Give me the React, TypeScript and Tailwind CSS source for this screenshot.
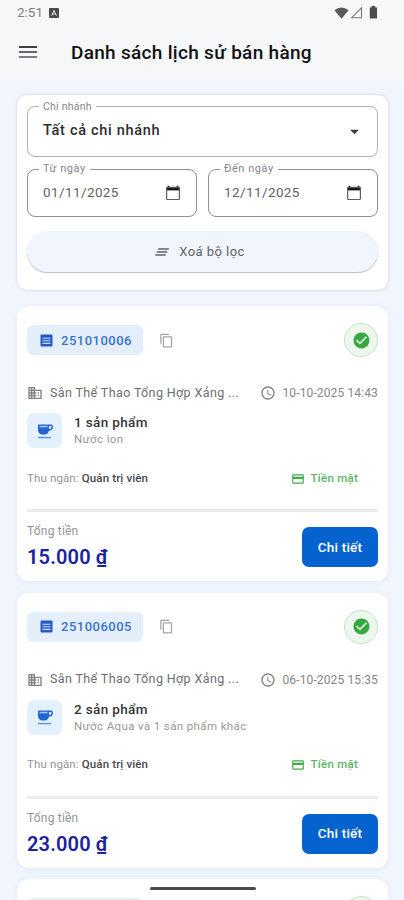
import React from "react";
import {
  MdClearAll,
  MdContentCopy,
  MdBusiness,
  MdAccessTime,
  MdCheckCircle,
  MdCreditCard,
  MdArrowDropDown,
} from "react-icons/md";

type Sale = {
  id: string;
  time: string;
  count: string;
  items: string;
  total: string;
};

const sales: Sale[] = [
  { id: "251010006", time: "10-10-2025 14:43", count: "1 sản phẩm", items: "Nước ion", total: "15.000 ₫" },
  { id: "251006005", time: "06-10-2025 15:35", count: "2 sản phẩm", items: "Nước Aqua và 1 sản phẩm khác", total: "23.000 ₫" },
];

function StatusBar() {
  return (
    <div className="flex h-[25px] items-center pl-[17px] pr-[26px]">
      <span className="text-[13.5px] leading-none text-[#808183]">2:51</span>
      <svg className="ml-[6px]" width="10" height="10" viewBox="0 0 10 10">
        <rect width="10" height="10" rx="1" fill="#4a4b4d" />
        <path d="M2.6 7.6L5 2.4l2.4 5.2M3.6 6h2.8" fill="none" stroke="#e4e5e7" strokeWidth="1" />
      </svg>
      <svg className="ml-auto" width="15" height="12" viewBox="0 0 15 12">
        <path d="M.4 3.3Q7.5-2.4 14.6 3.3L7.5 11.800z" fill="#58595b" />
      </svg>
      <svg className="ml-px" width="13" height="13" viewBox="0 0 13 13">
        <path d="M1.5 11.800L11.5 1.800v10z" fill="none" stroke="#77787a" strokeWidth="1.1" />
      </svg>
      <svg className="ml-[6px]" width="9" height="13" viewBox="0 0 9 13">
        <path d="M2.5 0h3.800v1.500H8v11H.8v-11h1.700z" fill="#4b4c4e" />
      </svg>
    </div>
  );
}

function MenuIcon() {
  return (
    <svg width="18" height="14" viewBox="0 0 18 14">
      <path d="M0 2h18" stroke="#3c3d40" strokeWidth="2" />
      <path d="M0 7h18" stroke="#66676a" strokeWidth="2" />
      <path d="M0 12h18" stroke="#7c7d80" strokeWidth="2" />
    </svg>
  );
}

function DateField({ label, value }: { label: string; value: string }) {
  return (
    <div className="relative flex h-[48px] flex-1 items-center justify-between rounded-[8px] border border-[#8f9092] pr-[15px] pl-[15px]">
      <span className="absolute -top-[8px] left-[11px] bg-white px-[4px] text-[11px] leading-[14px] tracking-[0.55px] whitespace-nowrap text-[#85868a]">
        {label}
      </span>
      <span className="text-[13.5px] leading-none tracking-[0.4px] text-[#606165]">{value}</span>
      <svg width="16" height="16" viewBox="0 0 16 16">
        <path d="M1.5 1.800h13v3.600h-13z" fill="#171719" />
        <path d="M3.500 .8v2M12.500 .8v2" stroke="#171719" strokeWidth="1.6" />
        <rect x="1.600" y="2.500" width="12.800" height="12" rx="1" fill="none" stroke="#5b5c5f" strokeWidth="1.2" />
      </svg>
    </div>
  );
}

function Filters() {
  return (
    <section className="h-[195px] rounded-[10px] bg-white px-[10px] pt-[11px] shadow-[0_0_3px_rgba(70,75,90,0.25)]">
      <div className="relative flex h-[51px] items-center justify-between rounded-[8px] border border-[#b0b1b3] pr-[12px] pl-[15px]">
        <span className="absolute -top-[7px] left-[11px] bg-white px-[4px] text-[10.5px] leading-[14px] tracking-[0.25px] whitespace-nowrap text-[#85868a]">
          Chi nhánh
        </span>
        <span className="text-[14.5px] leading-none font-medium tracking-[0.7px] text-[#2c2d30]">Tất cả chi nhánh</span>
        <MdArrowDropDown className="size-[21px] text-[#3c3d40]" />
      </div>
      <div className="mt-[12px] flex gap-[11px]">
        <DateField label="Từ ngày" value="01/11/2025" />
        <DateField label="Đến ngày" value="12/11/2025" />
      </div>
      <button className="mt-[14px] flex h-[41px] w-full items-center justify-center gap-[8px] rounded-full bg-[#f0f5fe] pr-[7px] text-[13px] tracking-[0.45px] text-[#606368] shadow-[0_1px_1px_rgba(60,65,80,0.35)]">
        <MdClearAll className="size-[18px]" />
        Xoá bộ lọc
      </button>
    </section>
  );
}

function InvoiceIcon() {
  return (
    <svg width="13" height="13" viewBox="0 0 13 13">
      <rect x=".5" y=".5" width="12" height="12" rx="1" fill="#2458c4" />
      <path d="M2.500 4.200h8M2.500 6.800h8M2.500 9.400h8" stroke="#cfe1fa" strokeWidth="1.1" />
    </svg>
  );
}

function CupIcon() {
  return (
    <svg width="18" height="18" viewBox="0 0 18 18">
      <path d="M2 2.500h11V8a4.500 4.500 0 0 1-4.500 4.500h-2A4.500 4.500 0 0 1 2 8z" fill="#1f66cf" />
      <path d="M3.500 3.800h8v1.500h-8z" fill="#a5c8f2" />
      <path d="M13 3.200h2.100q1 0 1 1v1.300q0 2.300-3.300 2.500" fill="none" stroke="#1f66cf" strokeWidth="1.5" />
      <path d="M2 15.600h13" stroke="#5b93e0" strokeWidth="1.4" />
    </svg>
  );
}

function StatusBadge() {
  return (
    <div className="ml-auto flex size-[34px] items-center justify-center rounded-full border border-[#c4e3c7] bg-[#edf7ee]">
      <MdCheckCircle className="size-[19px] text-[#35a83f]" />
    </div>
  );
}

function SaleCard({ sale }: { sale: Sale }) {
  return (
    <article className="h-[275px] shrink-0 rounded-[12px] bg-white px-[10px] pt-[17px] shadow-[0_1px_6px_rgba(70,90,140,0.08)]">
      <div className="flex h-[34px] items-center">
        <div className="flex h-[30px] w-[116px] items-center gap-[8px] rounded-[6px] bg-[#e5effb] pl-[13px]">
          <InvoiceIcon />
          <span className="text-[13px] leading-none font-medium tracking-[0.5px] text-[#3a72ce]">{sale.id}</span>
        </div>
        <MdContentCopy className="ml-[16px] size-[15px] text-[#a3a4a7]" />
        <StatusBadge />
      </div>

      <div className="mt-[27px] flex h-[18px] items-center">
        <MdBusiness className="size-[16px] text-[#808184]" />
        <span className="ml-[7px] text-[12.5px] leading-none tracking-[0.38px] whitespace-nowrap text-[#6c6d70]">Sân Thể Thao Tổng Hợp Xảng ...</span>
        <MdAccessTime className="ml-auto size-[16px] text-[#808184]" />
        <span className="ml-[6px] text-[12px] leading-none tracking-[0.13px] whitespace-nowrap text-[#85868a]">{sale.time}</span>
      </div>

      <div className="mt-[11px] flex h-[35px] items-center">
        <div className="flex size-[35px] items-center justify-center rounded-[7px] bg-[#e3f1fe]">
          <CupIcon />
        </div>
        <div className="ml-[12px] flex flex-col">
          <span className="text-[13.5px] leading-[18px] font-medium tracking-[0.35px] text-[#343538]">{sale.count}</span>
          <span className="text-[11.5px] leading-[17px] tracking-[0.38px] text-[#97989b]">{sale.items}</span>
        </div>
      </div>

      <div className="mt-[22px] flex h-[17px] items-center pr-[20px]">
        <span className="text-[11.5px] leading-none tracking-[0.13px] whitespace-nowrap text-[#939497]">
          Thu ngân: <span className="font-medium text-[#46474a]">Quản trị viên</span>
        </span>
        <MdCreditCard className="ml-auto size-[14px] text-[#3eac49]" />
        <span className="ml-[6px] text-[11.5px] leading-none font-medium tracking-[0.25px] text-[#5ab563]">Tiền mặt</span>
      </div>

      <div className="mt-[22px] h-[3px] bg-[#ebecee]" />

      <div className="flex justify-between">
        <div className="pt-[10px]">
          <div className="text-[12px] leading-[18px] tracking-[0.2px] text-[#939497]">Tổng tiền</div>
          <div className="mt-[4px] text-[20px] leading-[26px] font-semibold tracking-[0.15px] text-[#1a22a0]">{sale.total}</div>
        </div>
        <button className="mt-[15px] h-[40px] w-[76px] rounded-[7px] bg-[#0563cf] text-[13.5px] font-medium tracking-[0.2px] text-white">
          Chi tiết
        </button>
      </div>
    </article>
  );
}

function NextCardEdge() {
  return (
    <article className="h-[60px] shrink-0 rounded-t-[12px] bg-white px-[10px] pt-[17px] shadow-[0_1px_6px_rgba(70,90,140,0.08)]">
      <div className="flex h-[34px] items-center">
        <div className="h-[30px] w-[116px] rounded-[6px] bg-[#e5effb]" />
        <StatusBadge />
      </div>
    </article>
  );
}

export default function App() {
  return (
    <div className="relative flex h-[900px] w-[404px] flex-col overflow-hidden bg-[#f1f5fe] font-['Roboto','Noto_Sans',sans-serif]">
      <header className="h-[81px] shrink-0 bg-[#f6f7f9]">
        <StatusBar />
        <div className="flex h-[54px] items-center pl-[19px]">
          <MenuIcon />
          <h1 className="ml-[34px] text-[19px] leading-none font-medium tracking-[0.3px] whitespace-nowrap text-[#111113]">
            Danh sách lịch sử bán hàng
          </h1>
        </div>
      </header>
      <main className="pt-[14px] pr-[16px] pl-[17px]">
        <Filters />
        <div className="mt-[16px] flex flex-col gap-[11.5px]">
          {sales.map((sale) => (
            <SaleCard key={sale.id} sale={sale} />
          ))}
          <NextCardEdge />
        </div>
      </main>
      <div className="absolute bottom-[10px] left-[150px] h-[3px] w-[106px] rounded-full bg-[#4a4b4d]" />
    </div>
  );
}
